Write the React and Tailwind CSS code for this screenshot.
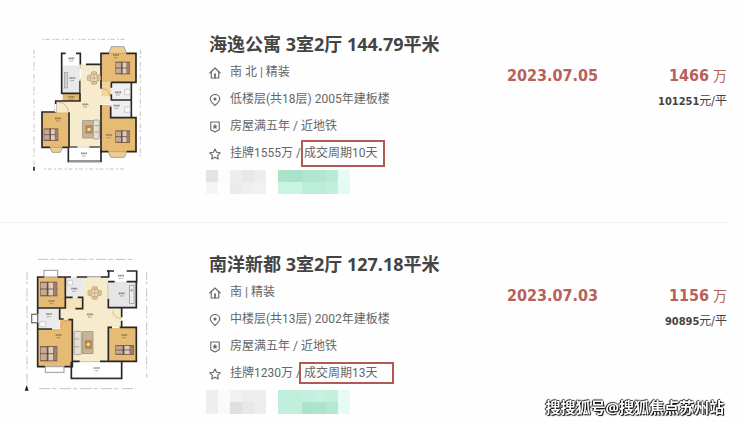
const listings = [
  {
    id: 1,
    title: '海逸公寓 3室2厅 144.79平米',
    facing: '南 北 | 精装',
    floor: '低楼层(共18层) 2005年建板楼',
    tags: '房屋满五年 / 近地铁',
    asking: '挂牌1555万 / ',
    cycle: '成交周期10天',
    cycleBox: 'w-[84px] h-[27px] -top-[6px] -left-[3px]',
    date: '2023.07.05',
    price: '1466',
    unitPrice: '101251',
    mosaic: [
      '#e3e3e3', '#fcfcfc', '#ededed', '#e8e8e8', '#eeeeee', '#ffffff', '#aee3ca', '#a9e2c8', '#b0e5ce', '#b4e7d2', '#b9ead6', '#e6fbf3',
      '#f5f5f5', '#fefefe', '#ebebeb', '#efefef', '#f1f1f1', '#ffffff', '#c9f3e3', '#c9f3e2', '#bdeedb', '#bbedd9', '#c1eedd', '#e2faf2',
    ],
  },
  {
    id: 2,
    title: '南洋新都 3室2厅 127.18平米',
    facing: '南 | 精装',
    floor: '中楼层(共13层) 2002年建板楼',
    tags: '房屋满五年 / 近地铁',
    asking: '挂牌1230万 / ',
    cycle: '成交周期13天',
    cycleBox: 'w-[95px] h-[22px] -top-[4px] -left-[5px]',
    date: '2023.07.03',
    price: '1156',
    unitPrice: '90895',
    mosaic: [
      '#eeeeee', '#fafafa', '#f1f1f1', '#ededed', '#eeeeee', '#ffffff', '#bfeeda', '#bfeeda', '#c3f0de', '#c5f1df', '#c3efdd', '#e6fbf3',
      '#efefef', '#fafafa', '#dfdfdf', '#e8e8e8', '#ededed', '#ffffff', '#c1efdd', '#c1efdd', '#abe4cb', '#ace5cd', '#b4e8d3', '#e6fbf3',
    ],
  },
];

const Icon = ({ children }) => (
  <svg className="size-3 shrink-0 text-[#666]" viewBox="0 0 24 24" fill="none" stroke="currentColor" strokeWidth="2.2" strokeLinejoin="round" strokeLinecap="round" aria-hidden="true">
    {children}
  </svg>
);

const HomeIcon = () => (
  <Icon>
    <path d="M1.5 12 12 2l10.500 10" />
    <path d="M4.500 10v12h4.500M19.500 10v12H15" />
    <path d="M12 14v8" strokeWidth="3.500" />
  </Icon>
);

const PinIcon = () => (
  <Icon>
    <path d="M12 23C6 17 2.500 14 2.500 9.800a9.500 8.800 0 0 1 19 0C21.500 14 18 17 12 23z" />
    <circle cx="12" cy="10" r="2" fill="currentColor" />
  </Icon>
);

const BadgeIcon = () => (
  <Icon>
    <path d="M3.500 2h17v15.500L12 22l-8.500-4.500z" />
    <path d="m12 7 1.200 2.800 3 .2-2.300 2 .8 3-2.700-1.600L9.300 15l.8-3-2.300-2 3-.2z" fill="currentColor" strokeWidth="1" />
  </Icon>
);

const StarIcon = () => (
  <Icon>
    <path d="m12 2 3.200 6.600 7.300 1-5.300 5.100 1.300 7.300L12 18.500 5.500 22l1.300-7.300L1.500 9.600l7.300-1z" />
  </Icon>
);

const Bed = ({ x, y, w = 44, h = 38 }) => (
  <g>
    <rect x={x} y={y} width={w} height={h} fill="#866550" />
    <rect x={x + 2} y={y + 4} width={w * 0.35} height={h - 8} fill="#c4ab97" />
    <rect x={x + w * 0.48} y={y + 3} width={w * 0.28} height={h - 6} fill="#decdbd" />
    <path d={`M${x} ${y + h / 2}h${w}M${x + w * 0.45} ${y}v${h}`} stroke="#4c392e" strokeWidth="2" />
    <rect x={x + w * 0.8} y={y + 4} width={w * 0.16} height={h - 8} fill="#a08069" />
  </g>
);

const Dining = ({ x, y }) => (
  <g stroke="#b39a70" strokeWidth="2">
    <rect x={x - 8} y={y - 19} width="16" height="38" rx="4" fill="#dfc797" />
    <rect x={x - 20} y={y - 8} width="40" height="16" rx="4" fill="#dfc797" />
    <circle cx={x} cy={y} r="12" fill="#e9dcb8" />
    <path d={`M${x - 12} ${y}h24M${x} ${y - 12}v24`} />
  </g>
);

// room captions are too small to read at this size
const Caption = ({ x, y }) => (
  <g stroke="#5b4a3a" opacity="0.65">
    <path d={`M${x - 9} ${y}h18`} strokeWidth="5" strokeDasharray="4 1" />
    <path d={`M${x - 6} ${y + 8}h12`} strokeWidth="2.500" strokeDasharray="3 1" />
  </g>
);

const PlanOne = () => (
  <svg className="h-[150px] w-[130px]" viewBox="0 0 390 450" role="img" aria-label="户型图">
    <g stroke="#c4c4c4" strokeWidth="3" fill="none">
      <path d="M68 31h98M176 31h140" strokeDasharray="5 4 12 8" />
      <path d="M72 420h245" strokeDasharray="6 5 12 8" />
      <path d="M42 62v350M361 62v332" strokeDasharray="14 5 6 12" />
    </g>
    <path d="M42 413v12" stroke="#222" strokeWidth="5" />
    <path d="M180 106h62v96h28v24h-28v126h-95V250h-40v-33h73z" fill="#f7ebce" />
    <rect x="126" y="73" width="54" height="36" fill="#fff" />
    <rect x="126" y="109" width="54" height="83" fill="#e9e8ea" />
    <rect x="128" y="192" width="52" height="24" fill="#dfb873" />
    <rect x="243" y="73" width="105" height="87" fill="#e6bb74" />
    <path d="M267 73l7-20h38l7 20z" fill="#f0cd8c" stroke="#a4a4a4" strokeWidth="3" />
    <path d="M243 160h31v42h-31z" fill="#f0d69c" />
    <rect x="274" y="160" width="60" height="54" fill="#efeff1" />
    <rect x="274" y="216" width="60" height="48" fill="#efeff1" />
    <path d="M243 228h31v36h75v104H243z" fill="#e6bb74" />
    <path d="M265 368l7 17h41l7-17z" fill="#f0cd8c" stroke="#a4a4a4" strokeWidth="3" />
    <rect x="66" y="250" width="80" height="105" fill="#e6bb74" />
    <path d="M90 355l6 15h25l6-15z" fill="#f0cd8c" stroke="#a4a4a4" strokeWidth="3" />
    <rect x="145" y="355" width="98" height="43" fill="#fff" />
    <g stroke="#2a2624" strokeWidth="5" fill="none">
      <path d="M125 192V73h12M168 73h13v34M125 145v48h55v-38M180 192v24h-73v33H66v106h24M127 355h20V250" />
      <path d="M198 106h44M267 73h-24v106M319 73h29v87h-74M274 160v16M274 196v17h60M334 160v104" />
      <path d="M243 228v140h22M320 368h28V266h-76v-33" />
      <path d="M147 354h25M208 354h35M145 358v39h98v-35" />
    </g>
    <path d="M181 106v86M147 354h96" stroke="#c1b7a3" strokeWidth="2" />
    <path d="M181 120v28M107 225v25" stroke="#fff" strokeWidth="5" />
    <path d="M147 397h94" stroke="#aaa" strokeWidth="3" />
    <rect x="133" y="130" width="9" height="47" fill="#d3d1cc" stroke="#999" strokeWidth="2" />
    <path d="M314 181h16v16h-16zM314 234h16v16h-16z" fill="#fafafa" stroke="#bbb" strokeWidth="2" />
    <path d="M116 220a28 28 0 0 1 28 28M245 178a24 24 0 0 1 24 24" fill="none" stroke="#c59c56" strokeWidth="2" />
    <Dining x={222} y={147} />
    <rect x="188" y="275" width="43" height="52" fill="#c5b49b" stroke="#938673" strokeWidth="2" />
    <rect x="196" y="288" width="22" height="26" fill="#b68c4d" />
    <circle cx="207" cy="301" r="5" fill="#eee0bd" />
    <rect x="220" y="273" width="18" height="57" rx="4" fill="#e5dfd4" stroke="#8f8678" strokeWidth="2" />
    <path d="M224 290h13M224 309h13" stroke="#8f8678" strokeWidth="2" />
    <Bed x={286} y={98} />
    <Bed x={286} y={304} />
    <Bed x={71} y={298} />
    <Caption x={154} y={88} />
    <Caption x={157} y={147} />
    <Caption x={154} y={204} />
    <Caption x={288} y={78} />
    <Caption x={294} y={190} />
    <Caption x={290} y={230} />
    <Caption x={196} y={226} />
    <Caption x={114} y={268} />
    <Caption x={267} y={318} />
    <Caption x={192} y={373} />
  </svg>
);

const PlanTwo = () => (
  <svg className="h-[150px] w-[140px]" viewBox="0 0 420 450" role="img" aria-label="户型图">
    <g stroke="#c4c4c4" strokeWidth="3" fill="none">
      <path d="M55 31h292" strokeDasharray="30 6 14 8" />
      <path d="M57 419h290" strokeDasharray="34 6 12 10" />
      <path d="M21 68v338M380 68v318" strokeDasharray="24 5 8 14" />
    </g>
    <path d="M20 408l6 17H14z" fill="#222" />
    <path d="M188 84h76v94h40v57h-40v102H157V212h-38v-35h69z" fill="#f7ebce" />
    <path d="M136 145h52v34h-52z" fill="#f4e3b9" />
    <rect x="54" y="84" width="82" height="93" fill="#e6bb74" />
    <rect x="72" y="64" width="41" height="20" fill="#fff" stroke="#999" strokeWidth="3" />
    <rect x="138" y="84" width="50" height="60" fill="#e9e9ed" />
    <path d="M264 66h86v32h-86z" fill="#fff" />
    <rect x="266" y="98" width="82" height="78" fill="#e5e5e8" />
    <rect x="54" y="179" width="64" height="60" fill="#ebebee" />
    <rect x="35" y="196" width="18" height="25" fill="#fff" stroke="#777" strokeWidth="4" />
    <path d="M54 240h66v-28h36v140H54z" fill="#e6bb74" />
    <rect x="76" y="353" width="56" height="17" fill="#fff" stroke="#999" strokeWidth="3" />
    <rect x="266" y="237" width="82" height="99" fill="#e6bb74" />
    <rect x="154" y="338" width="150" height="49" fill="#fff" />
    <g stroke="#2a2624" strokeWidth="5" fill="none">
      <path d="M72 84H53v110M113 84h40M170 84h32M242 84h24V66h-5M136 84v93H54M138 145h20M173 145h15v34h-22" />
      <path d="M262 66h20M320 66h30v32h-30M284 98h-20M349 98v78h-84v-27M305 176v29M305 215v20" />
      <path d="M119 179v31h12M53 222v131h22M54 240h42M133 353h24V212h-12M157 337h22M240 337h109V235h-50M276 235h-11v102" />
      <path d="M154 338v50h151v-50" />
    </g>
    <path d="M202 83h40" stroke="#aaa" strokeWidth="4" />
    <path d="M158 386h142" stroke="#aaa" strokeWidth="2" />
    <path d="M264 100v49M180 338h60" stroke="#c7bda6" strokeWidth="3" />
    <path d="M278 187a26 26 0 0 0 26 22M122 236a24 24 0 0 1 24-22" fill="none" stroke="#c59c56" strokeWidth="2" />
    <path d="M143 94h15v14h-15zM59 218h18v15H59z" fill="#fafafa" stroke="#bbb" strokeWidth="2" />
    <rect x="329" y="110" width="13" height="53" fill="#eee" stroke="#888" strokeWidth="2" />
    <circle cx="335" cy="124" r="4" fill="#aaa" />
    <Dining x={224} y={132} />
    <rect x="187" y="248" width="32" height="66" fill="#c5b49b" stroke="#938673" strokeWidth="2" />
    <rect x="194" y="273" width="22" height="27" fill="#b68c4d" />
    <circle cx="205" cy="286" r="5" fill="#eee0bd" />
    <rect x="162" y="247" width="22" height="70" rx="4" fill="#e5dfd4" stroke="#8f8678" strokeWidth="2" />
    <path d="M163 270h14M163 293h14" stroke="#8f8678" strokeWidth="2" />
    <Bed x={60} y={98} w={52} h={44} />
    <Bed x={60} y={291} w={52} h={46} />
    <Bed x={286} y={288} w={56} h={30} />
    <Caption x={95} y={156} />
    <Caption x={163} y={119} />
    <Caption x={303} y={80} />
    <Caption x={305} y={133} />
    <Caption x={87} y={195} />
    <Caption x={210} y={196} />
    <Caption x={116} y={258} />
    <Caption x={313} y={258} />
    <Caption x={230} y={357} />
  </svg>
);

const plans = { 1: PlanOne, 2: PlanTwo };

const Listing = ({ item }) => {
  const Plan = plans[item.id];

  return (
    <article className="flex border-b border-[#f1f1f1] pt-[26px] pb-7 pr-[3px] last:border-b-0">
      <div className="w-[209px] shrink-0 pl-5">
        <Plan />
      </div>

      <div className="min-w-0 flex-1">
        <h2 className="text-[18px] leading-[30px] font-bold whitespace-nowrap text-[#444]">{item.title}</h2>
        <ul className="font-[Roboto,'Noto_Sans_CJK_SC',sans-serif] text-[12px] leading-[27px] whitespace-nowrap text-[#666]">
          <li className="flex items-center gap-[9px]"><HomeIcon />{item.facing}</li>
          <li className="flex items-center gap-[9px]"><PinIcon />{item.floor}</li>
          <li className="flex items-center gap-[9px]"><BadgeIcon />{item.tags}</li>
          <li className="flex items-center gap-[9px]">
            <StarIcon />
            <span className="whitespace-pre">
              {item.asking}
              <span className="relative">
                {item.cycle}
                <span className={`absolute border-2 border-[#b05a54] ${item.cycleBox}`} />
              </span>
            </span>
          </li>
        </ul>
        <div className="mt-[3px] -ml-[3px] grid w-fit grid-cols-[repeat(12,12px)]" aria-hidden="true">
          {item.mosaic.map((color, i) => (
            <span key={i} className="h-3" style={{ backgroundColor: color }} />
          ))}
        </div>
      </div>

      <p className="pt-8 font-['DejaVu_Sans_Condensed','DejaVu_Sans',sans-serif] text-[16px] leading-[30px] font-bold text-[#b8605a]">{item.date}</p>

      <div className="w-[129px] shrink-0 pt-8 text-right font-['DejaVu_Sans_Condensed','Noto_Sans_CJK_SC',sans-serif]">
        <p className="text-[14px] leading-[30px] text-[#b8605a]">
          <strong className="text-[16px]">{item.price}</strong> 万
        </p>
        <p className="text-[12px] leading-5 text-[#444]">
          <strong className="text-[11px]">{item.unitPrice}</strong>元/平
        </p>
      </div>
    </article>
  );
};

const App = () => {
  return (
    <main className="relative bg-[#fefefe] pt-[3px] pr-[10px] font-['Noto_Sans','Noto_Sans_CJK_SC',sans-serif]">
      {listings.map((item) => (
        <Listing key={item.id} item={item} />
      ))}
      <p className="fixed right-4 bottom-1 text-[15px] leading-6 font-bold text-white [text-shadow:1px_1px_1px_#000,-1px_0_1px_#000,0_-1px_1px_#333]">
        搜搜狐号@搜狐焦点苏州站
      </p>
    </main>
  );
};

export default App;
